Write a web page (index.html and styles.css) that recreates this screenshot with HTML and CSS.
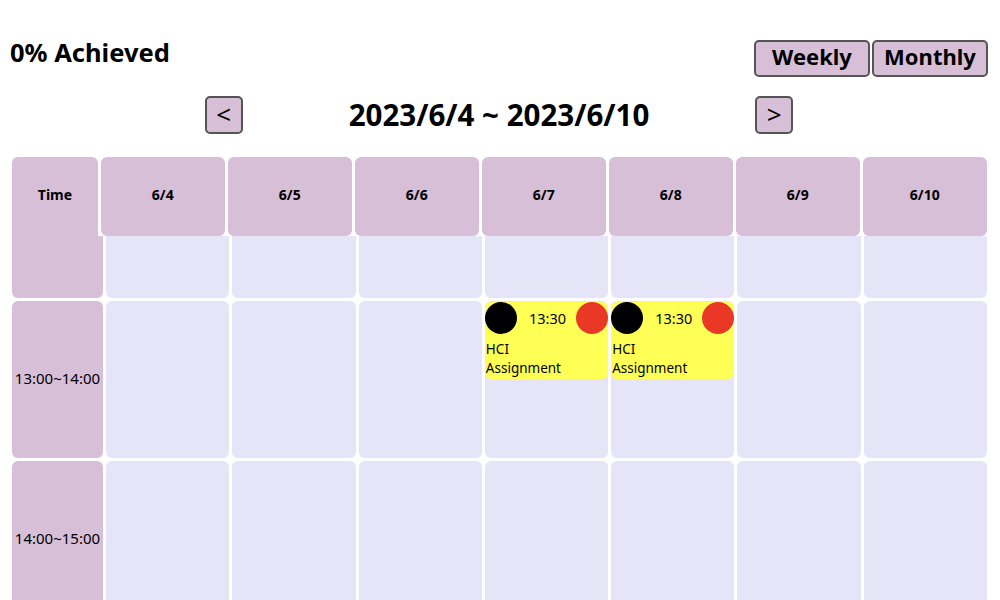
FILE: index.html
```html
<!DOCTYPE html>
<html>
<head>
<meta charset="utf-8">
<link rel="stylesheet" href="styles.css">
</head>
<body>
<div class="top">
  <h1 class="achieved">0% Achieved</h1>
  <div class="modes">
    <button class="mode">Weekly</button>
    <button class="mode">Monthly</button>
  </div>
</div>
<div class="nav">
  <button class="arrow">&lt;</button>
  <h2 class="range">2023/6/4 ~ 2023/6/10</h2>
  <button class="arrow">&gt;</button>
</div>
<div class="calendar">
  <div class="head">
    <div class="hcell time-h">Time</div>
    <div class="hcell">6/4</div>
    <div class="hcell">6/5</div>
    <div class="hcell">6/6</div>
    <div class="hcell">6/7</div>
    <div class="hcell">6/8</div>
    <div class="hcell">6/9</div>
    <div class="hcell">6/10</div>
  </div>
  <div class="body">
    <div class="tcell partial"></div>
    <div class="cell partial"></div>
    <div class="cell partial"></div>
    <div class="cell partial"></div>
    <div class="cell partial"></div>
    <div class="cell partial"></div>
    <div class="cell partial"></div>
    <div class="cell partial"></div>

    <div class="tcell">13:00~14:00</div>
    <div class="cell"></div>
    <div class="cell"></div>
    <div class="cell"></div>
    <div class="cell">
      <div class="event">
        <div class="ev-top"><span class="dot black"></span><span class="ev-time">13:30</span><span class="dot red"></span></div>
        <div class="ev-title">HCI<br>Assignment</div>
      </div>
    </div>
    <div class="cell">
      <div class="event">
        <div class="ev-top"><span class="dot black"></span><span class="ev-time">13:30</span><span class="dot red"></span></div>
        <div class="ev-title">HCI<br>Assignment</div>
      </div>
    </div>
    <div class="cell"></div>
    <div class="cell"></div>

    <div class="tcell">14:00~15:00</div>
    <div class="cell"></div>
    <div class="cell"></div>
    <div class="cell"></div>
    <div class="cell"></div>
    <div class="cell"></div>
    <div class="cell"></div>
    <div class="cell"></div>
  </div>
</div>
</body>
</html>
```

FILE: styles.css
```css
html, body {
  margin: 0;
  padding: 0;
  background: #ffffff;
  height: 600px;
  overflow: hidden;
}
body {
  font-family: "Noto Sans", "Noto Sans CJK KR", sans-serif;
  color: #000;
}
.top {
  display: flex;
  justify-content: space-between;
  align-items: flex-start;
  padding: 34px 12px 0 10px;
  height: 63px;
  box-sizing: border-box;
}
.achieved {
  margin: 0;
  font-size: 25.5px;
  font-weight: 700;
  line-height: 36px;
}
.modes {
  display: flex;
  gap: 2px;
  margin-top: 6px;
}
.mode {
  font-family: inherit;
  font-size: 22px;
  font-weight: 700;
  background: #d6bfd7;
  border: 2px solid #555;
  border-radius: 5px;
  width: 116px;
  height: 37px;
  padding: 0 0 6px;
  line-height: 1;
  color: #000;
}
.nav {
  display: flex;
  justify-content: center;
  align-items: center;
  gap: 106px;
  height: 94px;
  padding: 9px 2px 0 0;
  box-sizing: border-box;
}
.arrow {
  font-family: inherit;
  width: 38px;
  height: 38px;
  background: #d6bfd7;
  border: 2px solid #555;
  border-radius: 5px;
  font-size: 26px;
  padding: 0 0 1px;
  line-height: 1;
  color: #000;
}
.range {
  margin: 0;
  font-size: 29.5px;
  font-weight: 700;
  line-height: 38px;
}
.calendar {
  margin: 0 13px 0 12px;
}
.head {
  display: grid;
  grid-template-columns: 86px repeat(7, 1fr);
  grid-template-rows: 79px;
  column-gap: 2.5px;
  position: relative;
  z-index: 2;
}
.hcell {
  background: #d6bfd7;
  border-radius: 6px;
  height: 79px;
  box-sizing: border-box;
  padding-bottom: 4px;
  display: flex;
  align-items: center;
  justify-content: center;
  font-size: 14px;
  font-weight: 700;
}
.time-h {
  border-radius: 6px 6px 0 0;
  height: 83px;
  padding-bottom: 8px;
}
.body {
  display: grid;
  grid-template-columns: 91px repeat(7, 1fr);
  grid-template-rows: 62px 157px 157px;
  gap: 3px;
}
.cell {
  background: #e6e4f7;
  border-radius: 6px;
  padding: 1px 0 0 0;
}
.tcell {
  background: #d6bfd7;
  border-radius: 6px;
  display: flex;
  align-items: center;
  justify-content: center;
  font-size: 15px;
  padding-bottom: 3px;
}
.partial {
  border-top-left-radius: 0;
  border-top-right-radius: 0;
}
.event {
  background: #ffff55;
  border-radius: 6px;
  height: 77px;
}
.ev-top {
  display: flex;
  align-items: center;
  justify-content: space-between;
  height: 32px;
}
.dot {
  width: 32px;
  height: 32px;
  border-radius: 50%;
  display: block;
}
.black { background: #000; }
.red { background: #e93826; }
.ev-time {
  font-size: 14.5px;
  padding-left: 2px;
}
.ev-title {
  font-size: 13.5px;
  line-height: 19px;
  padding: 6px 0 0 1px;
}
```
